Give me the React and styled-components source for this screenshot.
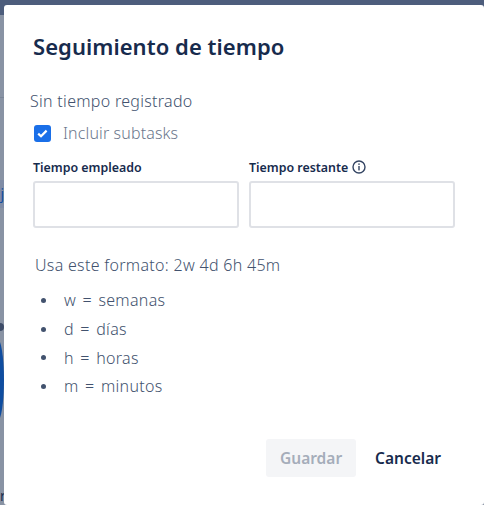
import React from 'react';
import styled, { createGlobalStyle } from 'styled-components';

const Global = createGlobalStyle`
  html, body { margin: 0; padding: 0; background: #8993a4; }
  #root { width: 484px; height: 505px; overflow: hidden; }
  * { box-sizing: border-box; }
`;

const Backdrop = styled.div`
  position: relative;
  width: 484px;
  height: 505px;
  overflow: hidden;
  background: #8993a4;
  padding: 5px 0 0 4px;
  font-family: "Noto Sans", "Open Sans", sans-serif;
`;

const TopBar = styled.div`
  position: absolute;
  left: 0;
  top: 0;
  width: 100%;
  height: 15px;
  background: #4d5d7c;
`;

const BehindRule = styled.div`
  position: absolute;
  left: 0;
  top: 97px;
  width: 4px;
  height: 1px;
  background: #7a8597;
`;

const BehindLink = styled.div`
  position: absolute;
  left: 0;
  top: 180px;
  width: 4px;
  height: 28px;
  background: #7f8ca6;
  color: #0f4da0;
  font-size: 14px;
  line-height: 28px;
  text-align: right;
`;

const BehindDot = styled.div`
  position: absolute;
  left: -4px;
  top: 323px;
  width: 8px;
  height: 8px;
  border-radius: 50%;
  background: #3d4c68;
`;

const BlueShape = styled.div`
  position: absolute;
  left: -10px;
  top: 338px;
  width: 14px;
  height: 84px;
  border-radius: 50%;
  background: #0f4da0;
`;

const BehindText = styled.div`
  position: absolute;
  left: 0;
  top: 486px;
  width: 4px;
  color: #172b4d;
  font-size: 14px;
  line-height: 20px;
  text-align: right;
`;

const Dialog = styled.div`
  position: relative;
  width: 480px;
  height: 500px;
  background: #fff;
  border-radius: 3px;
  padding: 25px 29px 0 29px;
  color: #172b4d;
`;

const Title = styled.h1`
  margin: 0;
  font-size: 22px;
  line-height: 32px;
  font-weight: 600;
  letter-spacing: 0.05px;
  color: #172b4d;
`;

const Status = styled.p`
  margin: 28px 0 0 -3px;
  font-size: 16px;
  line-height: 22px;
  font-weight: 300;
  letter-spacing: 0.3px;
  color: #42526e;
`;

const CheckRow = styled.label`
  display: flex;
  align-items: center;
  gap: 12px;
  margin: 10px 0 0 1px;
  height: 22px;
  font-size: 16px;
  font-weight: 300;
  letter-spacing: 0.13px;
  color: #6b778c;
`;

const CheckBox = styled.span`
  display: flex;
  align-items: center;
  justify-content: center;
  width: 17px;
  height: 17px;
  border-radius: 3px;
  background: #1a6fe8;
`;

const Fields = styled.div`
  display: grid;
  grid-template-columns: 206px 206px;
  gap: 10px;
  margin-top: 13px;
`;

const Field = styled.div`
  display: flex;
  flex-direction: column;
`;

const FieldLabel = styled.div`
  display: flex;
  align-items: center;
  gap: 4px;
  height: 20px;
  font-size: 12.4px;
  font-weight: 600;
  color: #172b4d;
`;

const Input = styled.input`
  display: block;
  width: 206px;
  height: 47px;
  margin-top: 4px;
  border: 2px solid #dfe1e6;
  border-radius: 3px;
  background: #fff;
  outline: none;
`;

const Hint = styled.p`
  margin: 26px 0 0 2px;
  font-size: 16px;
  line-height: 22px;
  font-weight: 300;
  letter-spacing: 0.3px;
  color: #42526e;
`;

const UnitList = styled.ul`
  list-style: none;
  margin: 10px 0 0 0;
  padding: 0;
`;

const Unit = styled.li`
  display: flex;
  align-items: center;
  height: 28.7px;
  padding-left: 31px;
  position: relative;
  font-size: 16px;
  font-weight: 300;
  letter-spacing: 0.3px;
  word-spacing: 2px;
  white-space: pre;
  color: #42526e;
  &::before {
    content: "";
    position: absolute;
    left: 8px;
    top: 12px;
    width: 5px;
    height: 5px;
    border-radius: 50%;
    background: #42526e;
  }
`;

const Actions = styled.div`
  display: flex;
  align-items: center;
  justify-content: flex-end;
  gap: 5px;
  position: absolute;
  top: 434px;
  right: 29px;
`;

const Button = styled.button`
  height: 38px;
  border: 0;
  border-radius: 3px;
  padding: 0 14px;
  font-family: inherit;
  font-size: 15.5px;
  font-weight: 600;
  background: ${p => (p.$disabled ? '#f4f5f7' : 'transparent')};
  color: ${p => (p.$disabled ? '#a5adba' : '#172b4d')};
`;

export default function App() {
  return (
    <Backdrop>
      <Global />
      <TopBar />
      <BehindRule />
      <BehindLink>j</BehindLink>
      <BehindDot />
      <BlueShape />
      <BehindText>r</BehindText>
      <Dialog>
        <Title>Seguimiento de tiempo</Title>
        <Status>Sin tiempo registrado</Status>
        <CheckRow>
          <CheckBox>
            <svg width="11" height="9" viewBox="0 0 11 9" fill="none">
              <path d="M1.2 4.6 L4 7.2 L9.6 1.6" stroke="#fff" strokeWidth="2.2" />
            </svg>
          </CheckBox>
          Incluir subtasks
        </CheckRow>
        <Fields>
          <Field>
            <FieldLabel>Tiempo empleado</FieldLabel>
            <Input />
          </Field>
          <Field>
            <FieldLabel>
              Tiempo restante
              <svg width="14" height="14" viewBox="0 0 14 14" fill="none">
                <circle cx="7" cy="7" r="6" stroke="#344563" strokeWidth="1.4" />
                <rect x="6.3" y="6" width="1.4" height="4.4" fill="#344563" />
                <rect x="6.3" y="3.4" width="1.4" height="1.5" fill="#344563" />
              </svg>
            </FieldLabel>
            <Input />
          </Field>
        </Fields>
        <Hint>Usa este formato: 2w 4d 6h 45m</Hint>
        <UnitList>
          <Unit>w = semanas</Unit>
          <Unit>d = días</Unit>
          <Unit>h = horas</Unit>
          <Unit>m = minutos</Unit>
        </UnitList>
        <Actions>
          <Button $disabled disabled>Guardar</Button>
          <Button>Cancelar</Button>
        </Actions>
      </Dialog>
    </Backdrop>
  );
}
